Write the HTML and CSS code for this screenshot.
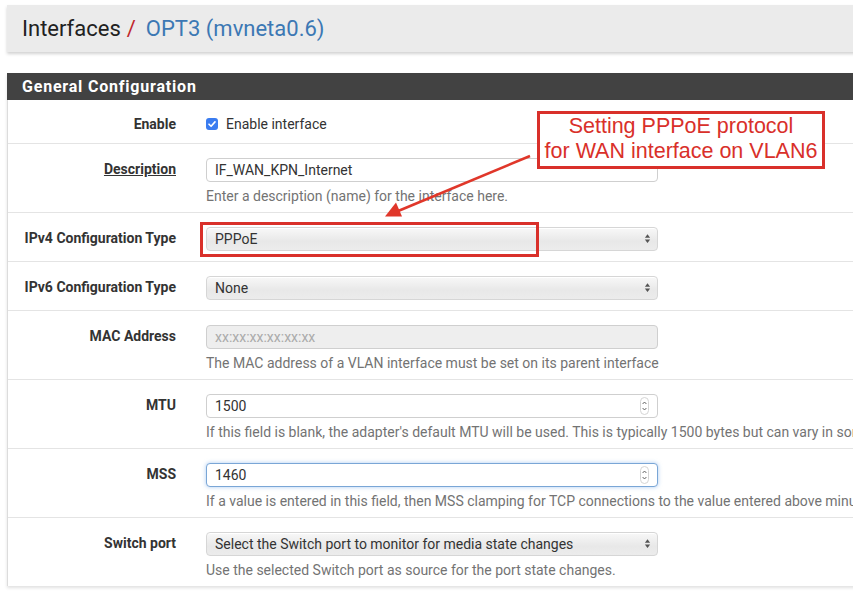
FILE: index.html
```html
<!DOCTYPE html>
<html>
<head>
<meta charset="utf-8">
<link rel="stylesheet" href="styles.css">
</head>
<body>
<div class="page">
  <div class="page-header">
    <span class="crumb">Interfaces</span><span class="sep">/</span><a class="crumb-link">OPT3 (mvneta0.6)</a>
  </div>

  <div class="panel">
    <div class="panel-heading">General Configuration</div>
    <div class="panel-body">
      <div class="row row-enable">
        <div class="label">Enable</div>
        <div class="field">
          <label class="check"><span class="checkbox"><svg viewBox="0 0 12 12" width="12" height="12"><path d="M3 6.2 L5.1 8.3 L9 3.9" fill="none" stroke="#fff" stroke-width="1.6" stroke-linecap="round" stroke-linejoin="round"/></svg></span>Enable interface</label>
        </div>
      </div>

      <div class="row">
        <div class="label"><span class="underline">Description</span></div>
        <div class="field">
          <div class="input">IF_WAN_KPN_Internet</div>
          <div class="help">Enter a description (name) for the interface here.</div>
        </div>
      </div>

      <div class="row">
        <div class="label">IPv4 Configuration Type</div>
        <div class="field">
          <div class="select">PPPoE<span class="sel-arrows"><svg viewBox="0 0 8 12" width="7" height="11"><path d="M4 1 L7 5 L1 5 Z M4 11 L7 7 L1 7 Z" fill="#555"/></svg></span></div>
        </div>
      </div>

      <div class="row">
        <div class="label">IPv6 Configuration Type</div>
        <div class="field">
          <div class="select">None<span class="sel-arrows"><svg viewBox="0 0 8 12" width="7" height="11"><path d="M4 1 L7 5 L1 5 Z M4 11 L7 7 L1 7 Z" fill="#555"/></svg></span></div>
        </div>
      </div>

      <div class="row">
        <div class="label">MAC Address</div>
        <div class="field">
          <div class="input disabled"><span class="placeholder">xx:xx:xx:xx:xx:xx</span></div>
          <div class="help">The MAC address of a VLAN interface must be set on its parent interface</div>
        </div>
      </div>

      <div class="row">
        <div class="label">MTU</div>
        <div class="field">
          <div class="input number">1500<span class="spin"><svg viewBox="0 0 9 18" width="9" height="18"><rect x="0.5" y="0.5" width="8" height="17" rx="4" fill="none" stroke="#d4d4d4"/><path d="M2.6 7 L4.5 5 L6.4 7 M2.6 11 L4.5 13 L6.4 11" fill="none" stroke="#555" stroke-width="0.9"/></svg></span></div>
          <div class="help">If this field is blank, the adapter's default MTU will be used. This is typically 1500 bytes but can vary in some circumstances.</div>
        </div>
      </div>

      <div class="row">
        <div class="label">MSS</div>
        <div class="field">
          <div class="input number focus">1460<span class="spin"><svg viewBox="0 0 9 18" width="9" height="18"><rect x="0.5" y="0.5" width="8" height="17" rx="4" fill="none" stroke="#d4d4d4"/><path d="M2.6 7 L4.5 5 L6.4 7 M2.6 11 L4.5 13 L6.4 11" fill="none" stroke="#555" stroke-width="0.9"/></svg></span></div>
          <div class="help">If a value is entered in this field, then MSS clamping for TCP connections to the value entered above minus 40 (IPv4) or 60 (IPv6) will be in effect.</div>
        </div>
      </div>

      <div class="row last">
        <div class="label">Switch port</div>
        <div class="field">
          <div class="select">Select the Switch port to monitor for media state changes<span class="sel-arrows"><svg viewBox="0 0 8 12" width="7" height="11"><path d="M4 1 L7 5 L1 5 Z M4 11 L7 7 L1 7 Z" fill="#555"/></svg></span></div>
          <div class="help">Use the selected Switch port as source for the port state changes.</div>
        </div>
      </div>
    </div>
  </div>

  <div class="callout">Setting PPPoE protocol<br>for WAN interface on VLAN6</div>
  <svg class="arrow" width="853" height="595" viewBox="0 0 853 595">
    <line x1="530" y1="156" x2="397" y2="211.5" stroke="#e0372a" stroke-width="2.6"/>
    <polygon points="385,216.5 402,216.5 396,202.5" fill="#e0372a"/>
  </svg>
  <div class="hl-box"></div>
</div>
</body>
</html>
```
FILE: styles.css
```css
html, body {
  margin: 0;
  padding: 0;
  overflow: hidden;
  background: #ffffff;
}
body {
  font-family: Roboto, "Liberation Sans", Arial, sans-serif;
  font-size: 14px;
  color: #333;
  width: 853px;
  height: 595px;
}
.page {
  position: relative;
  padding: 5px 0 0 7px;
  width: 1300px;
}
.page-header {
  height: 47px;
  background: #ebebeb;
  box-shadow: 0 2px 3px rgba(0,0,0,0.18);
  padding-left: 15px;
  line-height: 48px;
  font-size: 22px;
  color: #212121;
}
.sep {
  color: #c0282d;
  margin: 0 10px 0 6px;
}
.crumb-link {
  color: #3c78b4;
}
.panel {
  margin-top: 21px;
  box-shadow: 0 2px 3px rgba(0,0,0,0.12);
  background: #fff;
}
.panel-heading {
  height: 27px;
  line-height: 27px;
  background: #424242;
  color: #fff;
  font-weight: 700;
  font-size: 16px;
  letter-spacing: 0.8px;
  padding-left: 15px;
}
.panel-body {
  border-left: 1px solid #dcdcdc;
}
.row {
  display: flex;
  padding: 14px 0 10px;
  border-bottom: 1px solid #e4e4e4;
}
.row.row-enable {
  padding-top: 15px;
}
.row.last {
  border-bottom: none;
}
.label {
  width: 168px;
  text-align: right;
  font-weight: 700;
  line-height: 22px;
  color: #333;
  flex: none;
}
.underline {
  text-decoration: underline;
}
.field {
  margin-left: 30px;
  flex: none;
  width: 1000px;
}
.row-enable .field { line-height: 18px; }
.row-enable .label { line-height: 18px; }
.check {
  display: flex;
  align-items: center;
  gap: 8px;
  color: #333;
}
.checkbox {
  width: 12px;
  height: 12px;
  background: #3a7cf0;
  border-radius: 3px;
  display: inline-flex;
}
.input, .select {
  position: relative;
  width: 452px;
  height: 24px;
  box-sizing: border-box;
  border: 1px solid #cfcfcf;
  border-radius: 4px;
  padding-left: 8px;
  line-height: 22px;
  color: #333;
  background: #fff;
}
.input.disabled {
  background: #eeeeee;
}
.placeholder {
  color: #aaaaaa;
  font-size: 14px;
}
.input.focus {
  border-color: #7aa6d6;
  box-shadow: 0 0 4px rgba(102,160,230,0.55);
}
.select {
  background: linear-gradient(#f8f8f8, #e8e8e8 60%, #ececec);
  border-color: #d6d6d6;
  box-shadow: inset 0 1px 0 #fff;
}
.sel-arrows {
  position: absolute;
  right: 6px;
  top: 5px;
  display: flex;
}
.spin {
  position: absolute;
  right: 8px;
  top: 2px;
  display: flex;
}
.help {
  margin-top: 6px;
  margin-bottom: -3px;
  line-height: 17px;
  color: #737373;
  white-space: nowrap;
}
.callout {
  position: absolute;
  left: 537px;
  top: 111px;
  width: 282px;
  height: 52px;
  border: 3px solid #d9302a;
  background: #fff;
  color: #d9302a;
  font-family: "Liberation Sans", Arial, sans-serif;
  font-size: 21.5px;
  line-height: 25px;
  text-align: center;
  padding-top: 0;
}
.arrow {
  position: absolute;
  left: 0;
  top: 0;
  pointer-events: none;
}
.hl-box {
  position: absolute;
  left: 200px;
  top: 222px;
  width: 333px;
  height: 29px;
  border: 3px solid #d9302a;
}
```
